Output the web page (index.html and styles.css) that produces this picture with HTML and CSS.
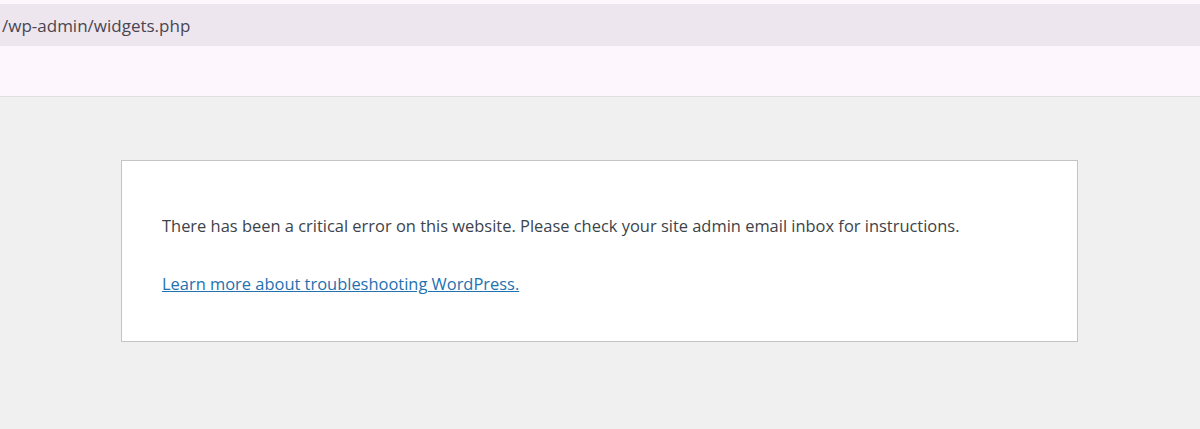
FILE: index.html
```html
<!DOCTYPE html>
<html lang="en">
<head>
<meta charset="utf-8">
<title>WordPress › Error</title>
<link rel="stylesheet" href="styles.css">
</head>
<body>
<header class="chrome">
  <div class="urlbar"><span class="url">/wp-admin/widgets.php</span></div>
  <div class="toolbar"></div>
</header>
<main class="page">
  <div class="card">
    <p class="msg">There has been a critical error on this website. Please check your site admin email inbox for instructions.</p>
    <p class="msg"><a href="#">Learn more about troubleshooting WordPress.</a></p>
  </div>
</main>
</body>
</html>
```
FILE: styles.css
```css
html, body {
  margin: 0;
  padding: 0;
  background: #f0f0f1;
  height: 100%;
}
body {
  font-family: "Open Sans", "Noto Sans", sans-serif;
}
.chrome {
  background: #fdf6fd;
  padding-top: 4px;
  border-bottom: 1px solid #e2dee2;
}
.urlbar {
  height: 42px;
  background: #ede6ef;
  display: flex;
  align-items: center;
  padding-left: 2px;
  padding-top: 1px;
  box-sizing: border-box;
  overflow: hidden;
}
.url {
  font-size: 17px;
  color: #4a4550;
  white-space: nowrap;
}
.toolbar {
  height: 50px;
}
.page {
  padding-top: 63px;
  display: flex;
  justify-content: center;
}
.card {
  width: 875px;
  margin-left: -1px;
  background: #fff;
  border: 1px solid #c3c4c7;
  padding: 52px 40px 45px 40px;
}
.msg {
  margin: 0 0 33px 0;
  font-size: 16.45px;
  line-height: 25px;
  color: #3c434a;
}
.msg:last-child {
  margin-bottom: 0;
}
.msg a {
  color: #2271b1;
  text-decoration: underline;
}
```
